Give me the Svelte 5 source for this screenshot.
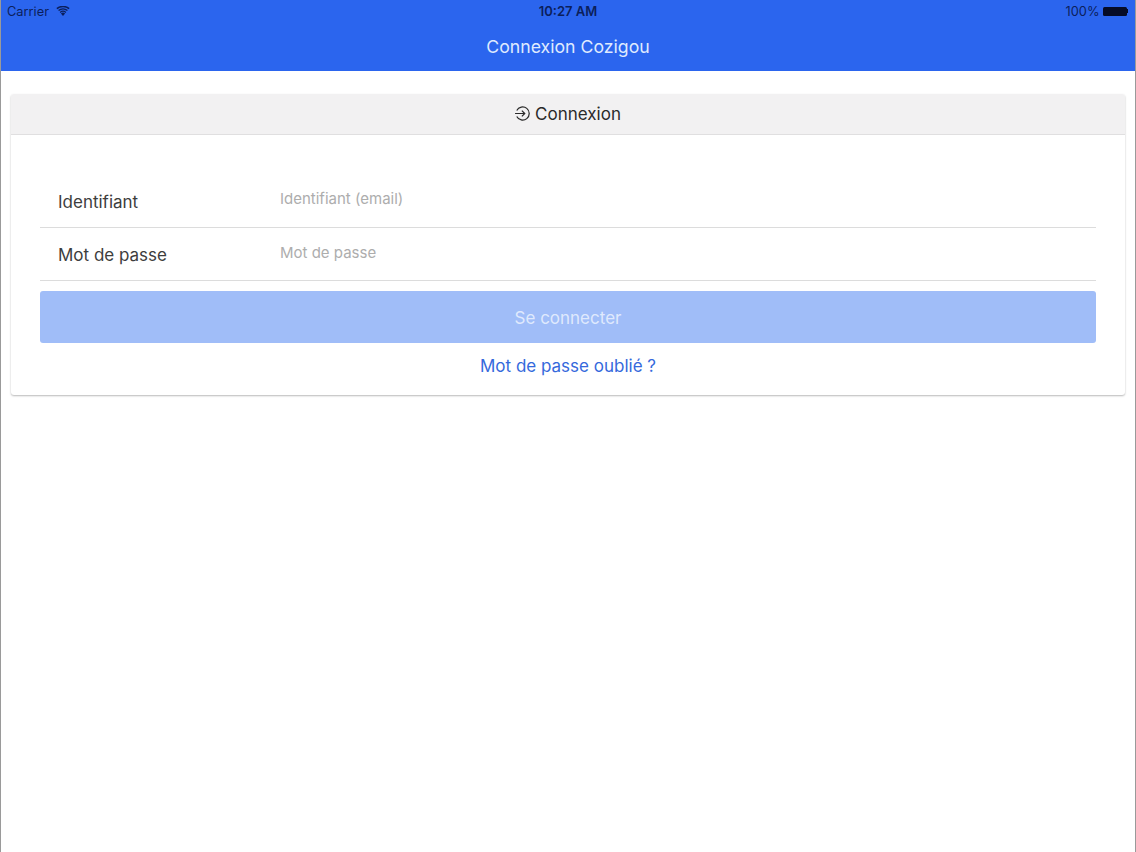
<script>
    let email = '';
    let password = '';
</script>

<div class="page">
    <header class="navbar">
        <div class="status">
            <div class="status-left">
                <span>Carrier</span>
                <svg class="wifi" width="14" height="10" viewBox="0 0 14 10">
                    <path d="M7 10 4.9 7.4a3.4 3.4 0 0 1 4.2 0Z" fill="#0b1f5c"/>
                    <path d="M3.7 5.9a5.2 5.2 0 0 1 6.6 0l-.8 1a3.9 3.9 0 0 0-5 0Z" fill="#0b1f5c"/>
                    <path d="M2.1 4a7.7 7.7 0 0 1 9.8 0l-.9 1.1a6.3 6.3 0 0 0-8 0Z" fill="#0b1f5c"/>
                    <path d="M.4 2.1a10.3 10.3 0 0 1 13.2 0l-.9 1.1a8.9 8.9 0 0 0-11.4 0Z" fill="#0b1f5c"/>
                </svg>
            </div>
            <span class="time">10:27 AM</span>
            <div class="status-right">
                <span>100%</span>
                <span class="battery"></span>
                <span class="battery-tip"></span>
            </div>
        </div>
        <div class="title">Connexion Cozigou</div>
    </header>

    <main>
        <section class="card">
            <div class="card-header">
                <svg class="login-icon" width="17" height="17" viewBox="0 0 16 16" fill="none" stroke="#2a2a2a" stroke-width="1.15">
                    <path d="M2.6 5.2a6.2 6.2 0 1 1 0 5.6"/>
                    <path d="M1 8h9M7.4 5.3 10.1 8l-2.7 2.7"/>
                </svg>
                <span>Connexion</span>
            </div>
            <form class="card-body" on:submit|preventDefault>
                <label class="row first">
                    <span class="label">Identifiant</span>
                    <input type="text" placeholder="Identifiant (email)" bind:value={email} />
                </label>
                <label class="row">
                    <span class="label">Mot de passe</span>
                    <input type="password" placeholder="Mot de passe" bind:value={password} />
                </label>
                <button type="submit" disabled>Se connecter</button>
                <a href="#forgot">Mot de passe oublié ?</a>
            </form>
        </section>
    </main>
</div>

<style>
    :global(body) {
        margin: 0;
        background: #fff;
        font-family: Inter, "Liberation Sans", sans-serif;
    }

    .page {
        height: 852px;
        box-sizing: border-box;
        border-left: 1px solid #9a9a9a;
        border-right: 1px solid #9a9a9a;
        overflow: hidden;
    }

    .navbar {
        height: 71px;
        margin: 0 -1px;
        background: #2b65ee;
        color: #fff;
    }

    .status {
        height: 22px;
        padding: 0 8px 0 7px;
        display: flex;
        justify-content: space-between;
        align-items: center;
        position: relative;
        font-size: 12.8px;
        color: #0b1f5c;
    }

    .status-left, .status-right {
        display: flex;
        align-items: center;
    }

    .wifi {
        margin-left: 7px;
    }

    .time {
        position: absolute;
        left: 0;
        right: 0;
        text-align: center;
        font-weight: 600;
        font-size: 13px;
    }

    .status-right {
        gap: 3px;
    }

    .battery {
        width: 24px;
        height: 9px;
        border-radius: 1.5px;
        background: #060c26;
    }

    .battery-tip {
        width: 1.5px;
        height: 4px;
        margin-left: -3px;
        background: #060c26;
    }

    .title {
        height: 49px;
        display: flex;
        align-items: center;
        justify-content: center;
        font-size: 17.7px;
        color: #dfeafe;
    }

    main {
        padding: 23px 10px 0;
    }

    .card {
        border-radius: 3px;
        background: #fff;
        box-shadow: 0 1px 2px rgba(0, 0, 0, 0.28);
    }

    .card-header {
        height: 40px;
        display: flex;
        align-items: center;
        justify-content: center;
        gap: 4px;
        background: #f2f1f2;
        border-bottom: 1px solid #e0dfe0;
        border-radius: 3px 3px 0 0;
        font-size: 17px;
        color: #2a2a2a;
    }

    .login-icon {
        margin-left: -1px;
        margin-bottom: 2px;
    }

    .card-body {
        display: flex;
        flex-direction: column;
        padding: 39px 29px 0;
        height: 260px;
        box-sizing: border-box;
    }

    .row {
        height: 53px;
        display: flex;
        align-items: center;
        box-sizing: border-box;
        border-bottom: 1px solid #dcdcdc;
        padding-left: 18px;
    }

    .row.first {
        height: 54px;
    }

    .label {
        width: 222px;
        font-size: 17px;
        color: #3d3d3d;
        padding-top: 2px;
    }

    input {
        flex: 1;
        border: none;
        outline: none;
        background: transparent;
        font-family: inherit;
        font-size: 15px;
        padding: 0;
        margin-bottom: 4px;
    }

    input::placeholder {
        color: #adadad;
        opacity: 1;
    }

    button {
        margin-top: 10px;
        height: 52px;
        padding: 2px 0 0;
        border: none;
        border-radius: 3px;
        background: #a0bdf8;
        color: #dfe9fd;
        font-family: inherit;
        font-size: 17px;
    }

    a {
        margin-top: 13px;
        text-align: center;
        text-decoration: none;
        color: #3569dc;
        font-size: 17px;
    }
</style>
